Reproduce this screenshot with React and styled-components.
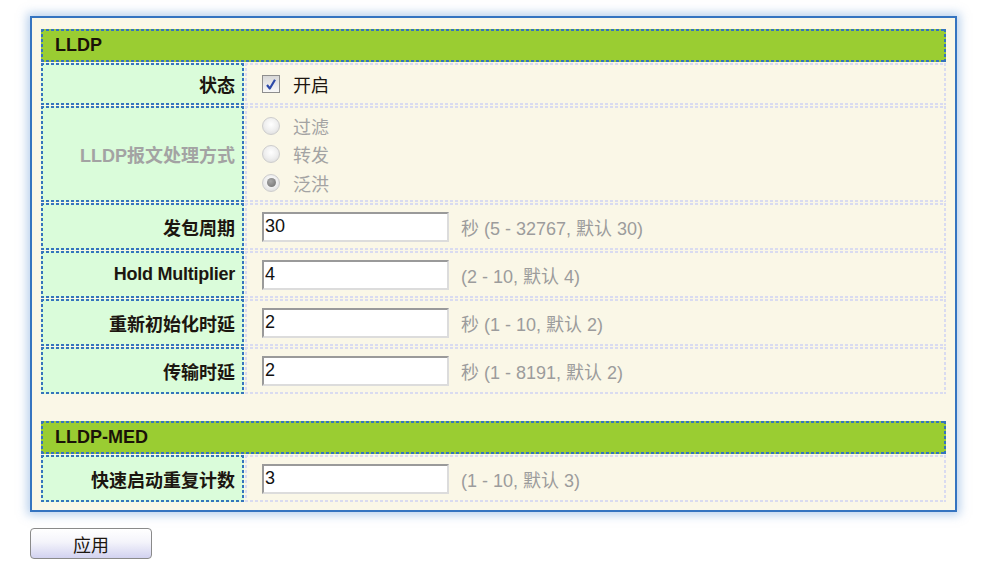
import React from "react";
import styled, { createGlobalStyle, css } from "styled-components";

const Global = createGlobalStyle`
  html, body { margin: 0; padding: 0; background: #ffffff; }
  body { font-family: "Liberation Sans", "Noto Sans CJK SC", sans-serif; }
  * { box-sizing: border-box; }
`;

const dashed = (color, fill, w) => css`
  background:
    repeating-linear-gradient(90deg, ${color} 0 3px, transparent 3px 5px) top left / 100% ${w}px no-repeat,
    repeating-linear-gradient(90deg, ${color} 0 3px, transparent 3px 5px) bottom left / 100% ${w}px no-repeat,
    repeating-linear-gradient(180deg, ${color} 0 3px, transparent 3px 5px) top left / ${w}px 100% no-repeat,
    repeating-linear-gradient(180deg, ${color} 0 3px, transparent 3px 5px) top right / ${w}px 100% no-repeat,
    ${fill};
`;

const Page = styled.div`
  padding: 16px 0 0 30px;
  width: 988px;
`;

const Panel = styled.div`
  width: 927px;
  background: #faf7e7;
  border: 2px solid #3574c0;
  box-shadow: 0 0 9px 3px rgba(120, 165, 220, 0.5);
  padding: 11px 9px 8px 9px;
`;

const Grid = styled.div`
  display: grid;
  grid-template-columns: 203px 1fr;
  column-gap: 1px;
  row-gap: 1px;
`;

const Header = styled.div`
  grid-column: 1 / -1;
  height: 33px;
  ${dashed("#3574bd", "#9acd32", 2)}
  display: flex;
  align-items: center;
  padding-left: 14px;
  font-size: 18px;
  font-weight: bold;
  color: #1a1208;
`;

const Spacer = styled.div`
  grid-column: 1 / -1;
  height: 25px;
`;

const Label = styled.div`
  height: ${(p) => p.$h}px;
  ${dashed("#3574bd", "#dafcda", 2)}
  display: flex;
  align-items: center;
  justify-content: flex-end;
  padding-right: 9px;
  font-size: 18px;
  font-weight: bold;
  color: ${(p) => (p.$disabled ? "#a3a3a3" : "#1c1610")};
  letter-spacing: ${(p) => (p.$latin ? "-0.25px" : "0")};
  white-space: nowrap;
`;

const Value = styled.div`
  height: ${(p) => p.$h}px;
  ${dashed("#d9dbf0", "transparent", 2)}
  display: flex;
  flex-direction: ${(p) => (p.$column ? "column" : "row")};
  align-items: ${(p) => (p.$column ? "flex-start" : "center")};
  justify-content: ${(p) => (p.$column ? "center" : "flex-start")};
  padding-left: 17px;
`;

const Option = styled.label`
  display: flex;
  align-items: center;
  height: 28.5px;
  font-size: 18px;
  color: ${(p) => (p.$disabled ? "#a3a3a3" : "#1c1610")};
`;

const CheckBox = styled.span`
  width: 18px;
  height: 18px;
  border: 1px solid #8e8e8e;
  background: linear-gradient(#d8d8d8, #f8f8f8);
  display: inline-flex;
  align-items: center;
  justify-content: center;
  margin-right: 13px;
`;

const Radio = styled.span`
  width: 18px;
  height: 18px;
  border-radius: 50%;
  border: 1px solid #cdcdcd;
  background: radial-gradient(circle at 50% 40%, #ffffff 0%, #efefef 50%, #d6d6d6 100%);
  display: inline-flex;
  align-items: center;
  justify-content: center;
  margin-right: 13px;
  &::after {
    content: "";
    display: ${(p) => (p.$checked ? "block" : "none")};
    width: 9px;
    height: 9px;
    border-radius: 50%;
    background: radial-gradient(circle at 40% 35%, #a8a8a8, #6e6e6e);
  }
`;

const Input = styled.input`
  width: 187px;
  height: 30px;
  border: 2px solid;
  border-color: #9a9a9a #dcdcdc #dcdcdc #9a9a9a;
  background: #ffffff;
  font-family: "Liberation Sans", "Noto Sans CJK SC", sans-serif;
  font-size: 18px;
  color: #111;
  padding: 0 1px;
  outline: none;
  margin: 0;
`;

const Hint = styled.span`
  margin-left: 12px;
  font-size: 18px;
  color: #9c9c9c;
  white-space: nowrap;
`;

const Button = styled.button`
  display: block;
  margin-top: 16px;
  width: 122px;
  height: 31px;
  border: 1px solid #8a8a8a;
  border-radius: 4px;
  background: linear-gradient(#ffffff 0%, #f4f4fb 45%, #d2d2f0 100%);
  font-family: "Liberation Sans", "Noto Sans CJK SC", sans-serif;
  font-size: 18px;
  color: #1c1610;
  padding: 0;
`;

const Check = () => (
  <svg width="12" height="13" viewBox="0 0 12 13">
    <path d="M2 7 L4.8 10.5 L10 1.8" stroke="#2b48a8" strokeWidth="2.2" fill="none" strokeLinejoin="round" />
  </svg>
);

const InputRow = ({ label, value, hint, latin }) => (
  <>
    <Label $h={47} $latin={latin}>{label}</Label>
    <Value $h={47}>
      <Input defaultValue={value} />
      <Hint>{hint}</Hint>
    </Value>
  </>
);

export default function App() {
  return (
    <>
      <Global />
      <Page>
        <Panel>
          <Grid>
            <Header>LLDP</Header>
            <Label $h={42}>状态</Label>
            <Value $h={42}>
              <Option>
                <CheckBox>
                  <Check />
                </CheckBox>
                开启
              </Option>
            </Value>
            <Label $h={96} $disabled>LLDP报文处理方式</Label>
            <Value $h={96} $column>
              <Option $disabled>
                <Radio />
                过滤
              </Option>
              <Option $disabled>
                <Radio />
                转发
              </Option>
              <Option $disabled>
                <Radio $checked />
                泛洪
              </Option>
            </Value>
            <InputRow label="发包周期" value="30" hint="秒 (5 - 32767, 默认 30)" />
            <InputRow label="Hold Multiplier" value="4" hint="(2 - 10, 默认 4)" latin />
            <InputRow label="重新初始化时延" value="2" hint="秒 (1 - 10, 默认 2)" />
            <InputRow label="传输时延" value="2" hint="秒 (1 - 8191, 默认 2)" />
            <Spacer />
            <Header>LLDP-MED</Header>
            <InputRow label="快速启动重复计数" value="3" hint="(1 - 10, 默认 3)" />
          </Grid>
        </Panel>
        <Button>应用</Button>
      </Page>
    </>
  );
}
